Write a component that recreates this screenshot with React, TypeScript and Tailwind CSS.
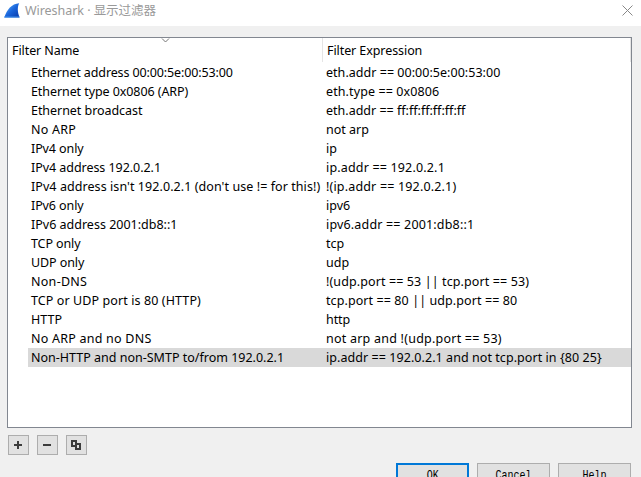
import type { ReactNode } from 'react';

type Filter = { name: string; nameTrack?: string; expr: string; exprTrack?: string };

const filters: Filter[] = [
  { name: 'Ethernet address 00:00:5e:00:53:00', nameTrack: 'tracking-[-0.12px]', expr: 'eth.addr == 00:00:5e:00:53:00', exprTrack: 'tracking-[0.03px]' },
  { name: 'Ethernet type 0x0806 (ARP)', nameTrack: 'tracking-[-0.08px]', expr: 'eth.type == 0x0806', exprTrack: 'tracking-[0.1px]' },
  { name: 'Ethernet broadcast', nameTrack: 'tracking-[-0.05px]', expr: 'eth.addr == ff:ff:ff:ff:ff:ff' },
  { name: 'No ARP', nameTrack: 'tracking-[0.25px]', expr: 'not arp' },
  { name: 'IPv4 only', nameTrack: 'tracking-[-0.1px]', expr: 'ip' },
  { name: 'IPv4 address 192.0.2.1', nameTrack: 'tracking-[-0.05px]', expr: 'ip.addr == 192.0.2.1', exprTrack: 'tracking-[0.17px]' },
  { name: "IPv4 address isn't 192.0.2.1 (don't use != for this!)", nameTrack: 'tracking-[0.07px]', expr: '!(ip.addr == 192.0.2.1)', exprTrack: 'tracking-[0.17px]' },
  { name: 'IPv6 only', nameTrack: 'tracking-[-0.1px]', expr: 'ipv6' },
  { name: 'IPv6 address 2001:db8::1', expr: 'ipv6.addr == 2001:db8::1', exprTrack: 'tracking-[0.17px]' },
  { name: 'TCP only', nameTrack: 'tracking-[-0.1px]', expr: 'tcp' },
  { name: 'UDP only', nameTrack: 'tracking-[-0.1px]', expr: 'udp' },
  { name: 'Non-DNS', nameTrack: 'tracking-[0.28px]', expr: '!(udp.port == 53 || tcp.port == 53)', exprTrack: 'tracking-[0.11px]' },
  { name: 'TCP or UDP port is 80 (HTTP)', nameTrack: 'tracking-[0.1px]', expr: 'tcp.port == 80 || udp.port == 80', exprTrack: 'tracking-[0.09px]' },
  { name: 'HTTP', expr: 'http', exprTrack: 'tracking-[-0.1px]' },
  { name: 'No ARP and no DNS', nameTrack: 'tracking-[0.23px]', expr: 'not arp and !(udp.port == 53)', exprTrack: 'tracking-[0.23px]' },
  { name: 'Non-HTTP and non-SMTP to/from 192.0.2.1', expr: 'ip.addr == 192.0.2.1 and not tcp.port in {80 25}', exprTrack: 'tracking-[0.06px]' },
];

const selected = filters.length - 1;

function FinIcon() {
  return (
    <svg width="17" height="16" viewBox="0 0 17 16" className="shrink-0">
      <defs>
        <linearGradient id="fin" x1="0" y1="0" x2="1" y2="1">
          <stop offset="0.2" stopColor="#4a9bf0" />
          <stop offset="0.5" stopColor="#1a66dc" />
          <stop offset="1" stopColor="#0838a8" />
        </linearGradient>
      </defs>
      <path d="M0.3 14.5C3 6.5 7.5 0.8 15.2 0.2C13.4 3.5 13.2 8.5 15.6 14.5Z" fill="url(#fin)" />
      <path d="M0.3 14H15.4" stroke="#3d8fea" strokeWidth="1" />
    </svg>
  );
}

function ToolButton({ label, children }: { label: string; children: ReactNode }) {
  return (
    <button aria-label={label} className="flex h-5 w-[21px] items-center justify-center border border-[#adadad] bg-[#e1e1e1]">
      <svg width="19" height="18" viewBox="0 0 19 18" shapeRendering="crispEdges" fill="none" stroke="#3c3c3c" strokeWidth="2">
        {children}
      </svg>
    </button>
  );
}

function DialogButton({ label, primary }: { label: string; primary?: boolean }) {
  return (
    <button
      className={`flex h-6 w-[73px] justify-center bg-[#e1e1e1] font-['Liberation_Mono',monospace] text-[13px] leading-[15px] text-black ${
        primary ? 'border-2 border-[#0078d7] pt-[3px]' : 'border border-[#adadad] pt-1'
      }`}
    >
      <span className="scale-x-[0.77]">{label}</span>
    </button>
  );
}

export default function App() {
  return (
    <div className="flex h-[477px] w-[641px] flex-col overflow-hidden bg-[#f0f0f0] font-['Noto_Sans','Noto_Sans_CJK_SC',sans-serif] text-[12.5px] text-black">
      <header className="flex h-[26px] shrink-0 items-start bg-white pl-1 pt-[3px]">
        <FinIcon />
        <h1 className="ml-1 mt-[-2px] whitespace-pre leading-[19px] tracking-[-0.05px] text-[#999]">Wireshark · 显示过滤器</h1>
        <svg width="11" height="11" viewBox="0 0 11 11" className="ml-auto mr-2 mt-[2px]" stroke="#888" strokeWidth="1">
          <path d="M0.5 0.5L10.5 10.5M10.5 0.5L0.5 10.5" />
        </svg>
      </header>

      <main className="ml-[7px] mt-[11px] h-[391px] w-[625px] shrink-0 border border-[#828790] bg-white">
        <div className="flex h-[25px] tracking-[-0.08px]">
          <div className="relative h-6 w-[315px] border-r border-[#e5e5e5] pl-1 leading-[25px]">
            Filter Name
            <svg width="9" height="5" viewBox="0 0 9 5" className="absolute left-[153px] top-0" fill="none" stroke="#777" strokeWidth="1">
              <path d="M1 0.5L4.5 4L8 0.5" />
            </svg>
          </div>
          <div className="h-6 w-[308px] border-r border-[#e5e5e5] pl-1 leading-[25px]">Filter Expression</div>
        </div>
        {filters.map((f, i) => (
          <div
            key={f.name}
            className={`ml-5 flex h-[19px] whitespace-pre pl-[3px] leading-[19px] ${i === selected ? 'bg-[#d9d9d9]' : ''}`}
          >
            <div className="w-[295px]">
              <span className={f.nameTrack}>{f.name}</span>
            </div>
            <span className={f.exprTrack}>{f.expr}</span>
          </div>
        ))}
      </main>

      <div className="ml-2 mt-[7px] flex shrink-0 gap-2">
        <ToolButton label="Add filter">
          <path d="M5 9H13M9 5V13" />
        </ToolButton>
        <ToolButton label="Remove filter">
          <path d="M5 9H13" />
        </ToolButton>
        <ToolButton label="Copy filter">
          <path d="M5 5H9V10H5ZM9 8H13V13H9Z" />
        </ToolButton>
      </div>

      <footer className="mr-[10px] mt-2 flex shrink-0 justify-end gap-2">
        <DialogButton label="OK" primary />
        <DialogButton label="Cancel" />
        <DialogButton label="Help" />
      </footer>
    </div>
  );
}
